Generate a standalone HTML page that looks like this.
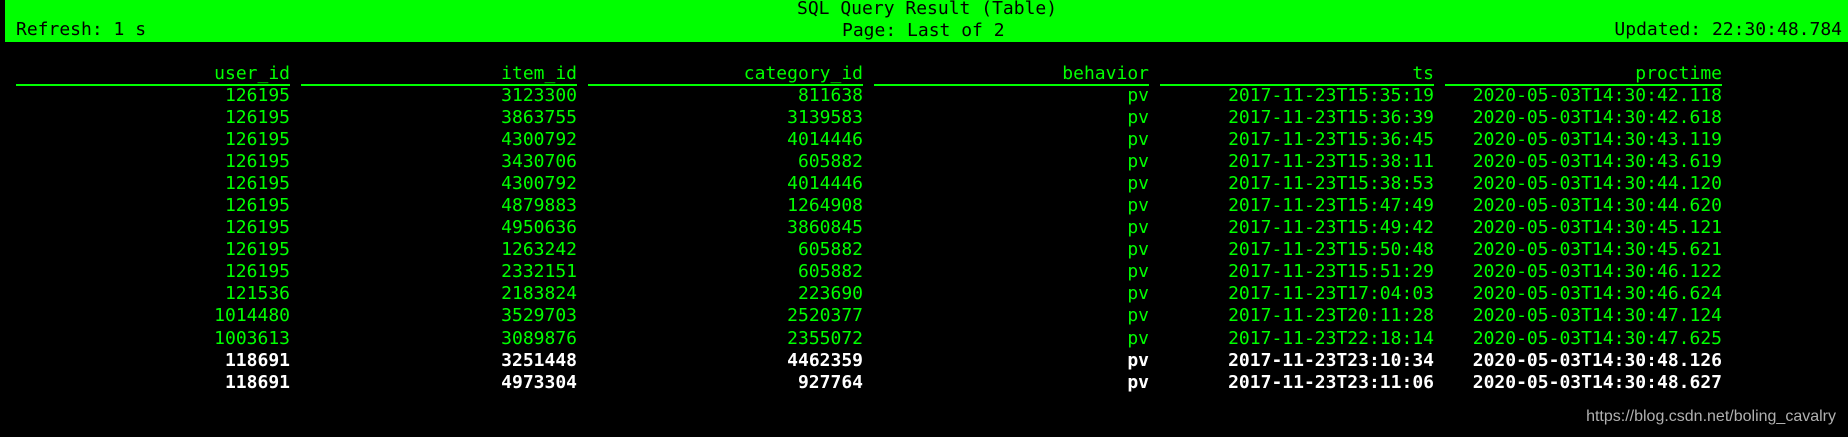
<!DOCTYPE html>
<html><head><meta charset="utf-8"><style>
html,body{margin:0;padding:0;background:#000;width:1848px;height:437px;overflow:hidden}
body{position:relative;font-family:"DejaVu Sans Mono","Liberation Mono",monospace;font-size:18px;color:#00ff00}
.bar{position:absolute;left:5px;top:0;width:1843px;height:42px;background:#00ff00;color:#000}
.t{position:absolute;white-space:pre;line-height:20px}
.col{position:absolute;top:64px;text-align:right;white-space:pre;line-height:22.1px}
.h{border-bottom:2px solid #00ff00;height:20px;line-height:20px;margin-bottom:-1.5px}
.w{color:#fff;font-weight:bold}
.wm{position:absolute;right:12px;top:408px;font-family:"Liberation Sans",Arial,sans-serif;font-size:16px;color:#b0b0b0}
</style></head><body>
<div class="bar"></div>
<div class="t" style="left:797px;top:-1px;color:#000">SQL Query Result (Table)</div>
<div class="t" style="left:842px;top:21px;color:#000">Page: Last of 2</div>
<div class="t" style="left:16px;top:20px;color:#000">Refresh: 1 s</div>
<div class="t" style="right:6px;top:20px;color:#000">Updated: 22:30:48.784</div>

<div class="col" style="left:16px;width:274px"><div class="h">user_id</div>126195<br>126195<br>126195<br>126195<br>126195<br>126195<br>126195<br>126195<br>126195<br>121536<br>1014480<br>1003613<br><span class="w">118691</span><br><span class="w">118691</span></div>
<div class="col" style="left:301px;width:276px"><div class="h">item_id</div>3123300<br>3863755<br>4300792<br>3430706<br>4300792<br>4879883<br>4950636<br>1263242<br>2332151<br>2183824<br>3529703<br>3089876<br><span class="w">3251448</span><br><span class="w">4973304</span></div>
<div class="col" style="left:588px;width:275px"><div class="h">category_id</div>811638<br>3139583<br>4014446<br>605882<br>4014446<br>1264908<br>3860845<br>605882<br>605882<br>223690<br>2520377<br>2355072<br><span class="w">4462359</span><br><span class="w">927764</span></div>
<div class="col" style="left:874px;width:275px"><div class="h">behavior</div>pv<br>pv<br>pv<br>pv<br>pv<br>pv<br>pv<br>pv<br>pv<br>pv<br>pv<br>pv<br><span class="w">pv</span><br><span class="w">pv</span></div>
<div class="col" style="left:1160px;width:274px"><div class="h">ts</div>2017-11-23T15:35:19<br>2017-11-23T15:36:39<br>2017-11-23T15:36:45<br>2017-11-23T15:38:11<br>2017-11-23T15:38:53<br>2017-11-23T15:47:49<br>2017-11-23T15:49:42<br>2017-11-23T15:50:48<br>2017-11-23T15:51:29<br>2017-11-23T17:04:03<br>2017-11-23T20:11:28<br>2017-11-23T22:18:14<br><span class="w">2017-11-23T23:10:34</span><br><span class="w">2017-11-23T23:11:06</span></div>
<div class="col" style="left:1445px;width:277px"><div class="h">proctime</div>2020-05-03T14:30:42.118<br>2020-05-03T14:30:42.618<br>2020-05-03T14:30:43.119<br>2020-05-03T14:30:43.619<br>2020-05-03T14:30:44.120<br>2020-05-03T14:30:44.620<br>2020-05-03T14:30:45.121<br>2020-05-03T14:30:45.621<br>2020-05-03T14:30:46.122<br>2020-05-03T14:30:46.624<br>2020-05-03T14:30:47.124<br>2020-05-03T14:30:47.625<br><span class="w">2020-05-03T14:30:48.126</span><br><span class="w">2020-05-03T14:30:48.627</span></div>

<div class="wm">https://blog.csdn.net/boling_cavalry</div>
</body></html>
